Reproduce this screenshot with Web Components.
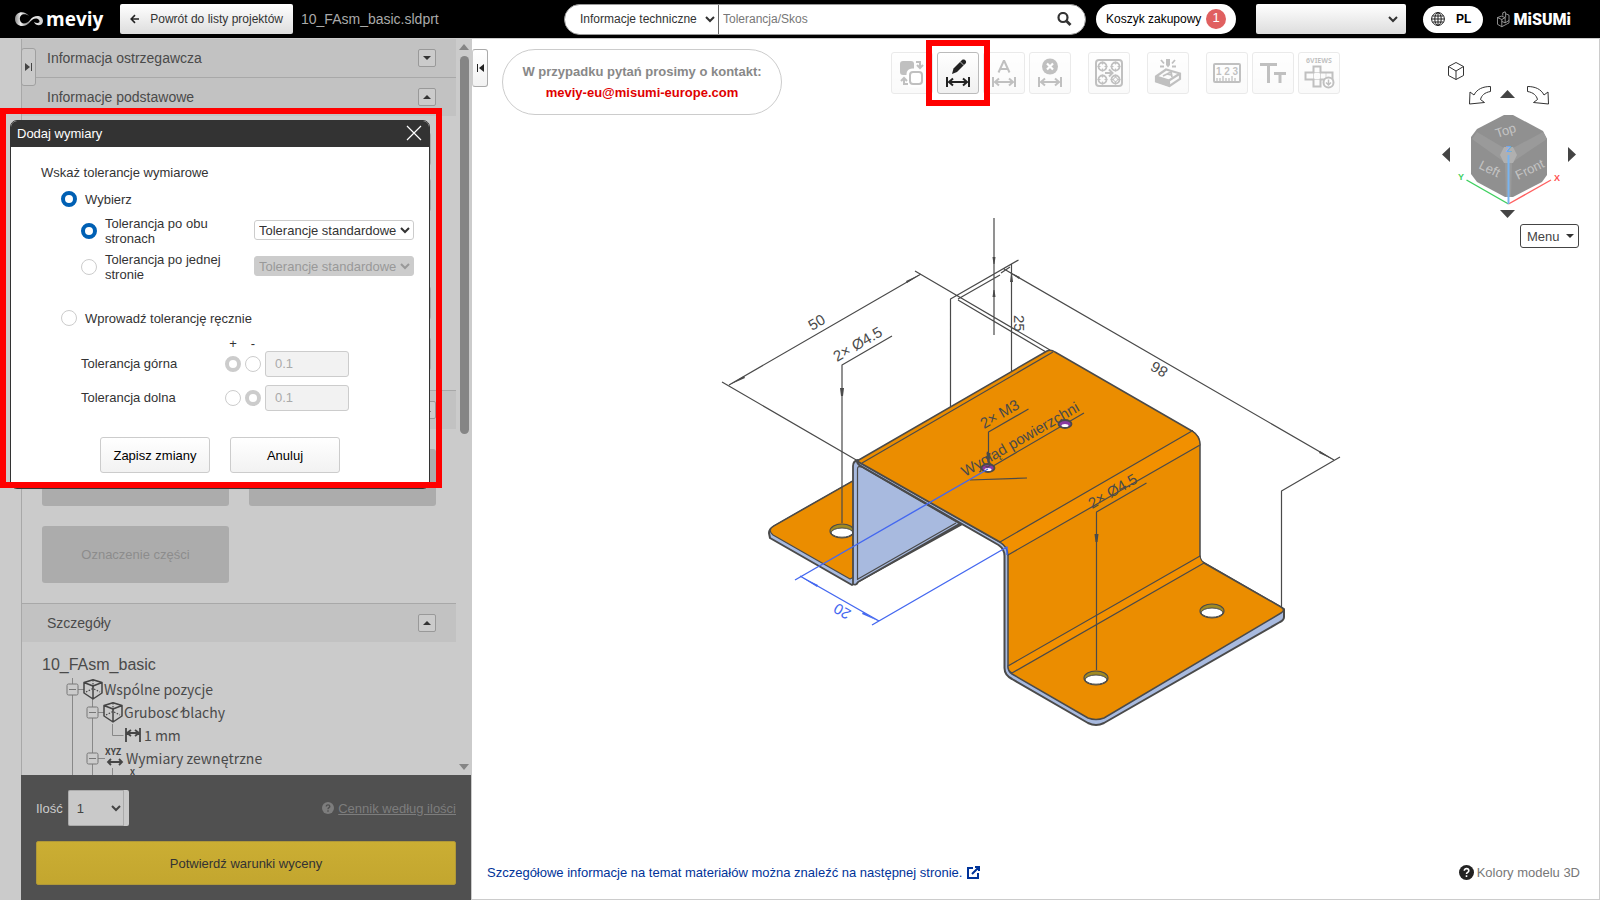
<!DOCTYPE html>
<html lang="pl">
<head>
<meta charset="utf-8">
<title>meviy</title>
<style>
html,body{margin:0;height:100%}
body{font-family:"Liberation Sans",Arial,sans-serif;font-size:13px;color:#333;background:#fff;overflow:hidden}
</style>
</head>
<body>
<mv-app></mv-app>
<script>
const base = `*,*::after,:host::after{box-sizing:border-box}button,input,select{font:inherit;color:inherit;margin:0}svg{display:block}`;
function define(name, css, html, setup){
  customElements.define(name, class extends HTMLElement{
    constructor(){
      super();
      this.attachShadow({mode:'open'}).innerHTML = `<style>${base}${css}</style>${html}`;
      if(setup) setup.call(this, this.shadowRoot);
    }
  });
}

/* ---------- header ---------- */
define('mv-header', `
:host{display:flex;align-items:center;height:39px;padding:0 29px 0 15px;background:#000;border-bottom:1px solid #ccc;font-size:12px}
.logo{display:flex;align-items:center;gap:3px;width:90px;color:#fff;text-decoration:none;font:700 19px "Open Sans",sans-serif;line-height:24px}
.back{display:flex;align-items:center;gap:11px;height:30px;margin-left:15px;padding:0 10px;border:0;border-radius:2px;background:linear-gradient(#fff,#ddd);width:173px;white-space:nowrap}
.name{margin-left:8px;font-size:14px;color:#aaa}
form{display:flex;height:31px;width:522px;margin-left:auto;background:#fff;border:1px solid #999;border-radius:16px;overflow:hidden}
form select{width:154px;border:0;border-right:1px solid #666;background:none;padding:0 2px 0 11px;outline:0}
form input{flex:1;border:0;padding:0 4px;outline:0;min-width:0}
form input::placeholder{color:#777}
form button{border:0;background:none;padding:0 13px}
.cart{display:flex;align-items:center;gap:5px;width:140px;height:30px;margin-left:10px;padding:0 10px;border:0;border-radius:15px;background:#fff;color:#000;white-space:nowrap}
.cart b{width:20px;height:20px;border-radius:50%;background:#e06060;color:#fff;font-weight:400;font-size:13px;line-height:18px;text-align:center}
.user{width:150px;height:30px;margin-left:20px;border:0;border-right:5px solid transparent;border-radius:2px;background:linear-gradient(#fff,#ddd) border-box;padding:0 5px}
.lang{display:flex;align-items:center;gap:11px;width:60px;height:27px;margin-left:17px;padding:0 8px;border:0;border-radius:14px;background:#fff;color:#000;font-weight:700}
.misumi{display:flex;align-items:center;gap:4px;width:74px;margin-left:14px;color:#fff;text-decoration:none;font:900 16px Roboto,sans-serif}
`, `
<a class="logo" href="#"><svg width="28" height="18" viewBox="0 0 28 18" fill="none"><defs><linearGradient id="g"><stop stop-color="#888"/><stop offset=".2" stop-color="#eee"/><stop offset=".45" stop-color="#999"/><stop offset=".6" stop-color="#eee"/><stop offset="1" stop-color="#ccc"/></linearGradient></defs><path d="M14 6C10 0 0 1 0 9s10 9 14 4c3-4 7-6 10-3 2 3-2 4-5 2 2 5 9 4 9-1 0-6-9-7-13-1-3 4-9 5-10 0-1-6 5-7 9-4z" fill="url(#g)"/></svg>meviy</a>
<button class="back" type="button"><svg width="12" height="12" viewBox="0 0 12 12" fill="none" stroke="#222" stroke-width="2"><path d="M12 6H2M6.500 1 1.500 6l5 5"/></svg>Powrót do listy projektów</button>
<span class="name">10_FAsm_basic.sldprt</span>
<form><select aria-label="Zakres"><option>Informacje techniczne</option></select><input type="text" aria-label="Szukaj" placeholder="Tolerancja/Skos"><button type="button" aria-label="Szukaj"><svg width="15" height="15" viewBox="0 0 15 15" fill="none" stroke="#333"><circle cx="6" cy="5.500" r="4.500" stroke-width="2.200"/><path d="m9.500 9 4 4" stroke-width="2.800"/></svg></button></form>
<button class="cart" type="button">Koszyk zakupowy <b>1</b></button>
<select class="user" aria-label="Użytkownik"><option></option></select>
<button class="lang" type="button"><svg width="14" height="14" viewBox="0 0 14 14" fill="none" stroke="#222"><circle cx="7" cy="7" r="6.400"/><ellipse cx="7" cy="7" rx="3.200" ry="6.400"/><path d="M7 .5v13M.5 7h13M1.500 4h11M1.500 10h11"/></svg>PL</button>
<a class="misumi" href="#"><svg width="13" height="17" viewBox="0 0 13 17" fill="none" stroke="#bbb" stroke-width=".8"><path d="M.5 6.500 5 8.500v7.500l-4.500-2.500zM5 8.500l3.500-2-4-1.500-4 1.500M5 16l7.500-4V4L9 2.500v4M5 10.500l3.500 1.500V7M6 4.500V1.500L8.500.5 9 2.500M8.500 12l4-2.500"/></svg>MiSUMi</a>
`);

/* ---------- sidebar ---------- */
define('mv-section', `
:host{display:block}
header{display:flex;align-items:center;justify-content:space-between;height:39px;padding:0 20px 0 25px;border-top:1px solid #a8a8a8;background:#c2c2c2;font-size:14px;color:#4a4a4a}
:host(:first-child) header{border-top:0;height:38px}
button{width:18px;height:18px;padding:0;border:1px solid #999;border-radius:2px;background:#cbcbcb;display:grid;place-items:center}
:host([closed]) svg{transform:rotate(180deg)}
`, `<header><span></span><button type="button" aria-label="Zwiń"><svg width="8" height="4" viewBox="0 0 8 4"><path d="M0 4 4 0l4 4z" fill="#333"/></svg></button></header><slot></slot>`,
function(r){ r.querySelector('span').textContent = this.getAttribute('heading') || ''; });

const cubeIcon = (x) => `<g transform="translate(${x} 1)" fill="none" stroke="#444" stroke-width="1.500" stroke-linejoin="round"><path d="M1 3.500 10 .7 19 3.500v10.500L10 20 1 14zM1 3.500l9 3.500L19 3.500M10 7v13"/><path d="M10 1v9M3 13l7-3.500L17 13" stroke-width="1.200" stroke-dasharray="1.500 1.500"/></g>`;
const box = (x) => `<path d="M${x + 6} 11.500h6" stroke="#888" fill="none"/><rect x="${x - 5}" y="6" width="11" height="11" rx="1.500" fill="#cbcbcb" stroke="#777"/><path d="M${x - 3} 11.500h7" stroke="#777"/>`;
define('mv-tree', `
:host{display:block;padding:13px 20px 0;color:#4a4a4a}
h3{margin:0;font-size:16px;font-weight:400;line-height:20px}
ul{list-style:none;margin:3px 0 0 20px;padding:0;font:14px/23px "Noto Sans CJK JP","Noto Sans",sans-serif}
li{display:flex;height:23px;white-space:nowrap}
svg{flex:none;overflow:visible}
.g{stroke:#888;fill:none}
`, `
<h3>10_FAsm_basic</h3>
<ul>
<li><svg width="42" height="23"><path class="g" d="M10.500 0v23M30.500 20v3"/>${box(10)}${cubeIcon(21)}</svg>Wspólne pozycje</li>
<li><svg width="62" height="23"><path class="g" d="M10.500 0v23M30.500 0v23"/>${box(30)}${cubeIcon(41)}</svg>Grubos\u0301c\u0301 blachy</li>
<li><svg width="82" height="23"><path class="g" d="M10.500 0v23M30.500 0v23M50.500 0v11.500h11"/><path d="M64 4v14M78 4v14M65 9h12M69 6l-4 3 4 3M73 6l4 3-4 3" fill="none" stroke="#444" stroke-width="1.800"/></svg>1 mm</li>
<li><svg width="64" height="23"><path class="g" d="M10.500 0v23M30.500 0v23M50.500 21v2M35 11.500h8"/>${box(30)}<text x="43" y="8" font-size="9" font-weight="700" fill="#444">XYZ</text><path d="M46 15h14M49 12l-3 3 3 3M57 12l3 3-3 3" fill="none" stroke="#444" stroke-width="1.800"/></svg>Wymiary zewnętrzne</li>
<li><svg width="90" height="23"><path class="g" d="M10.500 0v23M30.500 0v23M50.500 0v23"/><text x="68" y="5" font-size="8" font-weight="700" fill="#444">X</text></svg></li>
</ul>`);

define('mv-order', `
:host{display:block;height:125px;padding:15px 15px 0;margin-right:1px;background:#505050;color:#ccc}
.row{display:flex;align-items:center;height:36px}
label{margin-right:5px}
select{width:61px;height:36px;border:0;border-right:5px solid transparent;border-radius:2px;background:#c9c9c9 border-box;color:#444;padding:0 5px;box-shadow:inset 0 0 0 1px #aaa}
a{display:flex;align-items:center;gap:4px;margin-left:auto;color:#7d7d7d}
button{display:block;width:100%;height:44px;margin-top:15px;border:1px solid #b09838;border-radius:2px;background:linear-gradient(#cbae33,#c3a62f);color:#333}
`, `<div class="row"><label for="q">Ilość</label><select id="q"><option>1</option></select>
<a href="#"><svg width="12" height="12" viewBox="0 0 12 12"><circle cx="6" cy="6" r="6" fill="#7d7d7d"/><path d="M4.300 4.500c0-2.200 3.500-2 3.500 0C7.800 5.800 6 5.600 6 7.200M6 8.300v1.400" fill="none" stroke="#505050" stroke-width="1.400"/></svg>Cennik według ilości</a></div>
<button type="button">Potwierdź warunki wyceny</button>`);

define('mv-sidebar', `
:host{display:flex;position:relative;width:472px;flex:none;background:#cbcbcb}
.rail{width:21px}
.panel{flex:1;display:flex;flex-direction:column;min-width:0}
.view{flex:1;display:flex;min-height:0;overflow:hidden;border-left:1px solid #a8a8a8}
.content{flex:1;overflow:hidden}
.bar{display:flex;flex-direction:column;align-items:center;width:16px;padding:5px 0}
.thumb{width:9px;height:378px;margin-top:6px;border-radius:5px;background:#858585}
.bar svg:last-child{margin-top:auto}
.tab{position:absolute;left:21px;top:9px;width:15px;height:38px;padding:0;border:1px solid #a0a0a0;border-radius:3px;background:#c9c9c9;display:grid;place-items:center}
.fields{display:flex;flex-direction:column;height:274px;padding:16px 25px 0 20px}
.fields input{height:34px;border:1px solid #aaa;border-radius:3px;background:#cbcbcb;margin-bottom:12px}
.fields input:nth-child(2){margin-bottom:74px}
.fields input:nth-child(3){margin-bottom:17px}
.grid{display:grid;grid-template-columns:1fr 1fr;grid-auto-rows:57px;gap:20px;padding:20px}
.grid button{border:0;border-radius:3px;background:#acacac;color:#8c8c8c;padding-bottom:2px}
`, `
<div class="rail"></div>
<div class="panel">
<div class="view"><div class="content">
<mv-section heading="Informacja ostrzegawcza" closed></mv-section>
<mv-section heading="Informacje podstawowe"><div class="fields"><input disabled aria-label="Nazwa"><input disabled aria-label="Typ"><input disabled aria-label="Materiał"><input disabled aria-label="Powierzchnia"></div></mv-section>
<mv-section heading=""><div class="grid"><button type="button" disabled></button><button type="button" disabled></button><button type="button" disabled>Oznaczenie części</button></div></mv-section>
<mv-section heading="Szczegóły"><mv-tree></mv-tree></mv-section>
</div>
<div class="bar"><svg width="10" height="6"><path d="M0 6 5 0l5 6z" fill="#858585"/></svg><div class="thumb"></div><svg width="10" height="6"><path d="M0 0h10L5 6z" fill="#858585"/></svg></div>
</div>
<mv-order></mv-order>
</div>
<button class="tab" type="button" aria-label="Rozwiń"><svg width="8" height="8"><path d="M0 0l5 4-5 4zM6 0h1v8H6z" fill="#444"/></svg></button>`);

/* ---------- dialog ---------- */
define('mv-dialog', `
:host{display:block;position:absolute;left:10px;top:120px;width:420px;z-index:5}
:host::after{content:"";position:absolute;left:-10px;top:-12px;width:442px;bottom:1px;border:6px solid #f00;pointer-events:none}
section{border:1px solid #333;border-radius:7px;background:#fff;overflow:hidden;padding-bottom:15px}
header{display:flex;justify-content:space-between;align-items:center;height:26px;padding:0 7px 2px 6px;background:#333;color:#fff}
header button{padding:0;border:0;background:none}
.t{line-height:20px;padding:16px 0 0 30px}
label{line-height:15px}
.r{display:flex;align-items:center;gap:8px;padding-left:50px;margin-top:8px;height:16px}
.s{display:flex;align-items:center;gap:8px;padding-left:70px;margin-top:9px}
.s+.s{margin-top:6px}
.s label{width:125px}
.s select{width:160px;height:20px;margin:0 0 2px 16px;padding:0;border:1px solid #ccc;border-radius:3px;background:#fff;opacity:1}
.s select:disabled{background:#ccc;color:#999}
input[type=radio]{appearance:none;width:16px;height:16px;border:1px solid #ccc;border-radius:50%;background:#fff;flex:none}
input[type=radio]:checked{border:4px solid #0060b4}
input[type=radio]:disabled:checked{border-color:#ccc}
.m{margin-top:28px}
.pm{display:grid;grid-template-columns:140px 16px 16px 84px;gap:8px 4px;align-items:center;padding:11px 0 0 70px}
.pm i{font-style:normal;text-align:center;line-height:14px;height:14px;margin-bottom:-8px}
.pm label{padding-bottom:2px}
.pm input[type=text]{width:84px;height:26px;border:1px solid #ccc;border-radius:3px;background:#f2f2f2;color:#aaa;padding:0 9px 2px}
.b{display:flex;gap:20px;padding:26px 0 0 89px}
.b button{width:110px;height:36px;border:1px solid #ccc;border-radius:3px;background:linear-gradient(#fff,#f2f2f2);color:#000}
`, `
<section role="dialog" aria-label="Dodaj wymiary">
<header>Dodaj wymiary<button type="button" aria-label="Zamknij"><svg width="16" height="16"><path d="M1 1l14 14M15 1 1 15" stroke="#fff" stroke-width="1.200"/></svg></button></header>
<div class="t">Wskaż tolerancje wymiarowe</div>
<div class="r"><input type="radio" id="a" name="mode" checked><label for="a">Wybierz</label></div>
<div class="s"><input type="radio" id="c" name="side" checked><label for="c">Tolerancja po obu stronach</label><select aria-label="Tolerancja po obu stronach"><option>Tolerancje standardowe</option></select></div>
<div class="s"><input type="radio" id="d" name="side"><label for="d">Tolerancja po jednej stronie</label><select disabled aria-label="Tolerancja po jednej stronie"><option>Tolerancje standardowe</option></select></div>
<div class="r m"><input type="radio" id="e" name="mode"><label for="e">Wprowadź tolerancję ręcznie</label></div>
<div class="pm"><span></span><i>+</i><i>-</i><span></span>
<label for="u">Tolerancja górna</label><input type="radio" name="up" aria-label="+" checked disabled><input type="radio" name="up" aria-label="-" disabled><input type="text" id="u" value="0.1" disabled>
<label for="l">Tolerancja dolna</label><input type="radio" name="lo" aria-label="+" disabled><input type="radio" name="lo" aria-label="-" checked disabled><input type="text" id="l" value="0.1" disabled></div>
<div class="b"><button type="button">Zapisz zmiany</button><button type="button">Anuluj</button></div>
</section>`);

/* ---------- toolbar ---------- */
define('mv-tool', `
:host{display:block;position:relative;opacity:.3}
button{display:grid;place-items:center;width:42px;height:42px;padding:0;border:1px solid #bbb;border-radius:3px;background:linear-gradient(#fff,#f0f0f0)}
:host([gap]){margin-left:13px}
:host([active]){opacity:1;z-index:2}
:host([active])::after{content:"";position:absolute;inset:-12px -11px;border:6px solid #f00}
`, `<button type="button"><slot></slot></button>`,
function(r){ r.querySelector('button').setAttribute('aria-label', this.getAttribute('label') || ''); });

const dim = `<path d="M4 19v10M26 19v10M6 24h18M10 20.500 6 24l4 3.500M20 20.500l4 3.500-4 3.500" fill="none" stroke-width="2"/>`;
const hole = (x,y)=>`<circle cx="${x}" cy="${y}" r="4" stroke-width="1.800"/><path d="M${x-5} ${y}h3m4 0h3M${x} ${y-5}v3m0 4v3" stroke-width="1.200"/>`;
const tool = (label, attr, body) => `<mv-tool label="${label}" ${attr}><svg width="30" height="30" viewBox="0 0 30 30" fill="none" stroke="#333">${body}</svg></mv-tool>`;
define('mv-toolbar', `:host{display:flex;gap:4px}svg{overflow:visible}`,
 tool('Zamień','',`<rect x="3" y="3" width="14" height="14" rx="3" fill="#333" stroke="none"/><rect x="12" y="13" width="14" height="14" rx="3" fill="#fff" stroke="#fff" stroke-width="5"/><rect x="13" y="14" width="12" height="12" rx="3" fill="#fff" stroke-width="2"/><path d="M19 4h4v5M20 7l3 3 3-3M11 26H7v-5M4 23l3-3 3 3" stroke-width="2"/>`)+
 tool('Dodaj wymiary','active',`<path d="m9 16 1.500-5.500L19 2c2-1.500 5.500 1 3.500 3.500L14 14z" fill="#222" stroke="none"/><path d="m17 3.500 4 4" stroke="#fff" stroke-width=".7"/><g stroke="#222">${dim}</g>`)+
 tool('Tekst wymiaru','',`<path d="M9.500 14.500 14.700 3h.6l5.200 11.500M11.500 11h7" stroke-width="2"/>${dim}`)+
 tool('Usuń wymiar','',`<circle cx="15" cy="8.500" r="8" fill="#333" stroke="none"/><path d="m12 5.500 6 6m0-6-6 6" stroke="#fff" stroke-width="2.200"/>${dim}`)+
 tool('Otwory','gap',`<rect x="2" y="2" width="26" height="26" rx="3" stroke-width="2"/>${hole(8.500,8.500)}${hole(21.500,8.500)}${hole(8.500,21.500)}${hole(21.500,21.500)}<circle cx="21.500" cy="21.500" r="2"/><path d="M11 15h7M15 11.500l3.500 3.500-3.500 3.500" stroke-width="2"/>`)+
 tool('Grawerowanie','gap',`<path d="M13 1h4v6l-2 2.500L13 7z" fill="#333" stroke="none"/><path d="m8 2 3 3.500M22 2l-3 3.500M7 8.500h4M19 8.500h4" stroke-width="1.800"/><path d="m3 18.500 10-7 14 4V21L16.500 28 3 23.500zM3 18.500l13 4L27 15.500M16 23v5" stroke-width="2.200"/><path d="m10 18 8-4 1 5M14 16l4 1" stroke-width="1.800"/><path d="m3 18.500 13 4.500v5L3 23.500z" fill="#333"/>`)+
 tool('Miarka','gap',`<rect x="2" y="6" width="26" height="18" rx="1" stroke-width="2"/><path d="M5 23v-3m3 3v-3m3 3v-5m3 5v-3m3 3v-3m3 3v-5m3 5v-3" stroke-width="1.300"/><text x="15" y="17" font-size="10" font-weight="700" fill="#333" stroke="none" text-anchor="middle">1 2 3</text>`)+
 tool('Rozmiar tekstu','',`<path d="M2 6.500h17M10.500 6v19M16 15.500h12M22 15v10" stroke-width="3"/>`)+
 tool('6 widoków','',`<text x="15" y="5" font-size="7" font-weight="700" fill="#333" stroke="none" text-anchor="middle" font-family="Noto Sans">6VIEWS</text><path d="M9.500 8.500h7v6h12v7h-12v7h-7v-7h-8v-7h8z" stroke-width="2"/><path d="M9.500 14.500h7v7h-7zM22 15v6" stroke-width=".6"/><circle cx="24.500" cy="24.500" r="5" fill="#fff" stroke-width="2"/><path d="M24.500 21.500v5m-2.500-2 2.500 2.500 2.500-2.500" stroke-width="1.500"/>`)
);

/* ---------- orientation cube ---------- */
define('mv-gizmo', `
:host{display:flex;flex-direction:column;align-items:flex-end;gap:4px;width:140px}
button{display:flex;align-items:center;justify-content:space-between;width:59px;height:24px;padding:0 4px 0 6px;margin-right:1px;border:1px solid #444;border-radius:3px;background:#fff;color:#444}
text{font-family:"Liberation Sans",sans-serif}
`, `
<svg width="140" height="160" viewBox="1440 60 140 160">
<g fill="none" stroke="#333"><path d="m1456 62.500 7.500 4v9l-7.500 4-7.500-4v-9zM1448.500 66.500l7.500 4.500 7.500-4.500M1456 71v8.500"/>
<path d="M1490.500 86.500v5c-6 1-9 4-10 8l4 3-15 1.500.5-12 4 3c3-6 9-8.500 16.500-8.500zM1527.500 86.500v5c6 1 9 4 10 8l-4 3 15 1.500-.5-12-4 3c-3-6-9-8.500-16.500-8.500z"/></g>
<path d="M1500 98h15l-7.500-8zM1500 210h15l-7.500 8zM1450 147v15l-8-7.500zM1568 147v15l8-7.500z" fill="#444"/>
<path d="M1504 115h9l30 16 4 8v36l-5 7-29 15h-8l-28-15-6-8v-37l6-8z" fill="#909090"/>
<path d="M1472 139l5-7 27 16h9l30-16 4 7-30 20-5 4-1 34h-5l-1-34-5-4z" fill="#9a9a9a"/>
<path d="M1504 147h9l4 8-4 8h-9l-4-8z" fill="#b0b0b0"/>
<g fill="#c4c4c4" font-size="13"><text transform="translate(1497 138) rotate(-18)">Top</text><text transform="translate(1478 168) rotate(26)">Left</text><text transform="translate(1518 180) rotate(-26)">Front</text></g>
<g fill="none" stroke-width="1.400"><path d="M1508.500 204 1466.500 180" stroke="#3fd060"/><path d="M1508.500 204l42.500-24" stroke="#ff6060"/><path d="M1508.500 204v-49" stroke="#78b4f0" stroke-width="2"/></g>
<g font-size="9" font-weight="700"><text x="1458" y="180" fill="#3fd060">Y</text><text x="1554" y="181" fill="#ff5050">X</text><text x="1506" y="152" fill="#6aaaf0">Z</text></g>
</svg>
<button type="button">Menu<svg width="8" height="4"><path d="M0 0h8L4 4z" fill="#333"/></svg></button>`);

/* ---------- 3D part ---------- */
const oval = (x,y)=>`<ellipse cx="${x}" cy="${y}" rx="12" ry="7" fill="#a08a22"/><path d="M${x-11} ${y+2}a11 5 0 0 1 22 0a12 7 0 0 1-22 0z" fill="#fff" stroke-width="1"/>`;
const tap = (x,y)=>`<ellipse cx="${x}" cy="${y}" rx="6.500" ry="4" fill="#8a3aa0" stroke-width="1.800"/><ellipse cx="${x}" cy="${y+1.500}" rx="3.500" ry="1.600" fill="#fff" stroke="none"/>`;
define('mv-part', `:host{display:block}text{font-family:"Liberation Sans",sans-serif;font-size:15px;fill:#4a4a4a;stroke:none}`, `
<svg width="660" height="540" viewBox="706 199 660 540" fill="none" stroke="#4a4a4a" stroke-width="1.200" stroke-linejoin="round">
<path d="M722 382l136 79M915 271l135 79M729 385l192-111M958 300l88 52M950.500 407V299l68-39M958 299l42-24M1001 273l9-6M994 218v117M1011.500 264v109M1004 269l330 191"/>
<path d="M853 481 774 526q-5 3-5 7l1 5 82 47 5-3 105-58-5-4z" fill="#a8badf" stroke-width="2"/>
<path d="M853 481 774 526q-7 4-1 9l77 44 6-3v-95z" fill="#eb8d00"/>
${oval(842,531)}
<path d="M853 584V466q0-5 5-6l10 5-7 0 100 58-103 59q-2 4-5 2z" fill="#a8badf" stroke-width="1.800"/>
<path d="M857.500 580V469q0-4 5-1.500L960 524M858 579l98-56"/>
<path d="M1004.500 668V556q0-7-6-11L861 466q-4-2-4-5L1000 542 1192 431 1199 445V560L1284 609V617Q1284 620 1280 622L1104 723Q1096 727 1088 723L1012 679Q1004.500 675 1004.500 668Z" fill="#a8badf" stroke-width="2"/>
<path d="M857 461 1047 351Q1051 349 1055 352L1192 431Q1200 436 1200 445V557Q1200 561 1204 563L1281 607Q1286 610 1281 613L1104 718Q1096 721 1088 718L1012 674Q1008 672 1008 666V555Q1008 547 1000 542Z" fill="#eb8d00" stroke-width="1.500"/>
<path d="M1000 542 1192 431q8 5 8 14L1008 555q0-8-8-13zM1008 666l192-110q1 5 4 7l-192 110q-4-2-4-7z" fill="#f29000"/>
<path d="M862 463 1053 352"/>
${oval(1212,611)}${oval(1096,678)}
<path d="M1340 457l-58.500 34v116M988 469l96-56M970 480l57-2M842 523V365l50-29M1096.500 670V512l50-29M988.500 464v-32l40-23"/>
${tap(988,468)}${tap(1065,424)}
<g fill="#4a4a4a" stroke="none"><path d="M840 388h4l-1 8h-2zM1094.500 534h4l-1 8h-2zM986.500 453h4l-1 9h-2zM992.500 257h3l-1 7h-1zM992.500 297h3l-1-7h-1zM1010 282h3l-1-8h-1zM729 385l15-9 1 2zM921 274l-14 9-1-2zM1007 271l13 6-1 2zM1334 460l-14-9-1 2z"/></g>
<path d="M795 580l193-111M872 625l135-78v8M800 576l79 45" stroke="#4468f0" stroke-width="1.400"/><path d="M801 577l17 8-1 2zM878 621l-15-9-1 2z" fill="#4468f0" stroke="none"/>
<text transform="translate(812 331) rotate(-30)">50</text>
<text transform="translate(837 362) rotate(-30)">2× Ø4.5</text>
<text transform="translate(1092 509) rotate(-30)">2× Ø4.5</text>
<text transform="translate(984 429) rotate(-30)">2× M3</text>
<text transform="translate(965 477) rotate(-30)">Wygląd powierzchni</text>
<text transform="translate(1014 315) rotate(90)">25</text>
<text transform="translate(1169 369) rotate(210)">86</text>
<text transform="translate(852 611) rotate(210)" style="fill:#4468f0">20</text>
</svg>`);

define('mv-viewer', `
:host{display:flex;flex-direction:column;justify-content:space-between;position:relative;flex:1;min-width:0;border-right:1px solid #ccc;border-bottom:1px solid #ccc}
.canvas{position:absolute;inset:0 -1px 0 0;display:grid;place-items:center;overflow:hidden}
.top{position:relative;display:flex;align-items:flex-start;padding-right:19px}
.tab{width:16px;height:38px;margin-top:10px;padding:0;border:1px solid #aaa;border-left-color:#ccc;border-radius:3px;background:linear-gradient(#fff,#f2f2f2);display:grid;place-items:center}
.contact{width:280px;height:66px;margin:10px 0 0 14px;padding-top:11px;border:1px solid #ccc;border-radius:33px;text-align:center;font-weight:700;line-height:21px;color:#888;background:#fff}
.contact a{color:#e00000;text-decoration:none}
mv-toolbar{margin:13px 0 0 109px}
mv-gizmo{margin:21px 0 0 auto}
.bottom{position:relative;display:flex;justify-content:space-between;align-items:center;height:20px;padding:0 19px 0 15px;margin-bottom:17px}
.bottom a{display:flex;align-items:center;gap:5px;color:#003399;text-decoration:none}
.bottom span{display:flex;align-items:center;gap:3px;color:#777}
`, `
<div class="canvas"><mv-part></mv-part></div>
<div class="top"><button class="tab" type="button" aria-label="Zwiń"><svg width="8" height="8"><path d="M1 0h1v8H1zM8 0v8L3 4z" fill="#222"/></svg></button>
<div class="contact">W przypadku pytań prosimy o kontakt:<br><a href="mailto:meviy-eu@misumi-europe.com">meviy-eu@misumi-europe.com</a></div>
<mv-toolbar></mv-toolbar><mv-gizmo></mv-gizmo></div>
<div class="bottom"><a href="#">Szczegółowe informacje na temat materiałów można znaleźć na następnej stronie.<svg width="13" height="13" fill="none" stroke="#003399" stroke-width="2"><path d="M6 2H1v10h10V7M5 8l6.500-6.500M8 1h4v4"/></svg></a>
<span><svg width="15" height="15"><circle cx="7.500" cy="7.500" r="7.500" fill="#222"/><path d="M5.300 5.800c0-3 4.500-2.700 4.500 0C9.800 7.500 7.500 7.200 7.500 9M7.500 10.300V12" fill="none" stroke="#fff" stroke-width="1.600"/></svg>Kolory modelu 3D</span></div>`);

define('mv-app', `
:host{display:flex;flex-direction:column;height:100vh;position:relative}
main{flex:1;display:flex;min-height:0}
`, `<mv-header></mv-header><main><mv-sidebar></mv-sidebar><mv-viewer></mv-viewer></main><mv-dialog></mv-dialog>`);
</script>
</body>
</html>
